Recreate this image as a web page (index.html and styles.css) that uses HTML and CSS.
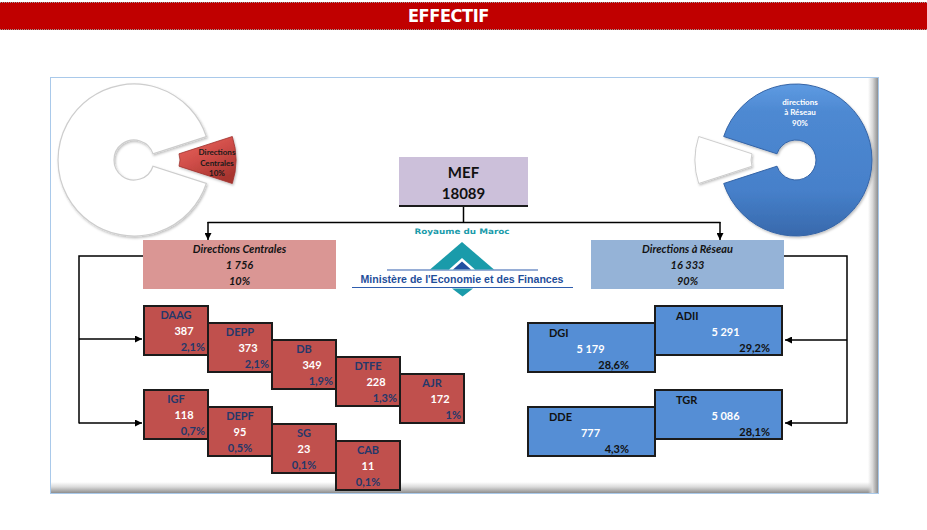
FILE: index.html
```html
<!DOCTYPE html>
<html lang="fr">
<head>
<meta charset="utf-8">
<title>Effectif</title>
<link rel="stylesheet" href="styles.css">
</head>
<body>
<div class="header"><span class="title">EFFECTIF</span></div>

<div class="frame">
  <svg class="canvas" viewBox="51 78 827 415" width="827" height="415" xmlns="http://www.w3.org/2000/svg">
    <defs>
      <linearGradient id="gBlue" x1="0" y1="0" x2="0" y2="1">
        <stop offset="0" stop-color="#5E9BE2"/>
        <stop offset="0.18" stop-color="#4E89D2"/>
        <stop offset="0.7" stop-color="#4680CA"/>
        <stop offset="1" stop-color="#3869AC"/>
      </linearGradient>
      <linearGradient id="gRed" x1="0" y1="0" x2="0.6" y2="1">
        <stop offset="0" stop-color="#EB6660"/>
        <stop offset="0.5" stop-color="#D04E49"/>
        <stop offset="1" stop-color="#A8352F"/>
      </linearGradient>
      <filter id="soft" x="-10%" y="-10%" width="130%" height="130%">
        <feDropShadow dx="1" dy="1.5" stdDeviation="1.2" flood-color="#000" flood-opacity="0.25"/>
      </filter>
      <marker id="arr" viewBox="0 0 10 10" refX="10" refY="5" markerUnits="userSpaceOnUse" markerWidth="7" markerHeight="7" orient="auto">
        <path d="M0,0 L10,5 L0,10 z" fill="#000"/>
      </marker>
    </defs>

    <!-- left donut (white 90%) and exploded red slice -->
    <path d="M206.3 136.5 A76 76 0 1 0 206.3 183.5 L153 166.2 A20 20 0 1 1 153 153.8 Z" fill="#fff" stroke="#cdcdcd" stroke-width="1.2" filter="url(#soft)"/>
    <path d="M179 153.8 L232.3 136.5 A76 76 0 0 1 232.3 183.5 L179 166.2 A20 20 0 0 0 179 153.8 Z" fill="url(#gRed)" stroke="#9E302C" stroke-width="0.8" filter="url(#soft)"/>
    <g class="pielabel dark">
      <text x="217" y="155">Directions</text>
      <text x="217" y="165.5">Centrales</text>
      <text x="217" y="176">10%</text>
    </g>

    <!-- right donut (blue 90%) and exploded white slice -->
    <path d="M723.7 136.5 A76 76 0 1 1 723.7 183.5 L777 166.2 A20 20 0 1 0 777 153.8 Z" fill="url(#gBlue)" stroke="#3564A6" stroke-width="1" filter="url(#soft)"/>
    <path d="M752 153.8 L698.7 136.5 A76 76 0 0 0 698.7 183.5 L752 166.2 A20 20 0 0 1 752 153.8 Z" fill="#fff" stroke="#cdcdcd" stroke-width="1" filter="url(#soft)"/>
    <g class="pielabel light">
      <text x="800" y="105">directions</text>
      <text x="800" y="115">à Réseau</text>
      <text x="800" y="125.5">90%</text>
    </g>

    <!-- connectors -->
    <g stroke="#000" stroke-width="1.5" fill="none">
      <line x1="463.5" y1="207" x2="463.5" y2="222.5"/>
      <line x1="207.5" y1="222.5" x2="720.5" y2="222.5"/>
      <line x1="208" y1="222" x2="208" y2="240" marker-end="url(#arr)"/>
      <line x1="720" y1="222" x2="720" y2="240" marker-end="url(#arr)"/>
      <polyline points="143,256 79,256 79,423.5"/>
      <line x1="79" y1="339" x2="142" y2="339" marker-end="url(#arr)"/>
      <line x1="79" y1="423" x2="142" y2="423" marker-end="url(#arr)"/>
      <polyline points="784,256 847,256 847,423.5"/>
      <line x1="847" y1="340" x2="785" y2="340" marker-end="url(#arr)"/>
      <line x1="847" y1="423" x2="785" y2="423" marker-end="url(#arr)"/>
    </g>

    <!-- ministry logo -->
    <g class="logo">
      <text class="royaume" x="462" y="233.5" textLength="95" lengthAdjust="spacingAndGlyphs">Royaume du Maroc</text>
      <line x1="387" y1="270" x2="538" y2="270" stroke="#2F5DAE" stroke-width="1.2"/>
      <polygon points="430,269.5 462,242 494,269.5" fill="#1A9BAA"/>
      <polygon points="449,269.5 462,258 475,269.5" fill="#fff"/>
      <polygon points="453,269.5 462,261.5 471,269.5" fill="#2050A0"/>
      <text class="ministere" x="462" y="283" textLength="203" lengthAdjust="spacingAndGlyphs">Ministère de l'Economie et des Finances</text>
      <line x1="352" y1="287.5" x2="573" y2="287.5" stroke="#2F5DAE" stroke-width="1.2"/>
      <polygon points="452,288.5 473,288.5 462.5,296.5" fill="#1A9BAA"/>
    </g>
  </svg>

  <div class="mef">
    <div>MEF</div>
    <div>18089</div>
  </div>

  <div class="summary sum-dc">
    <div>Directions Centrales</div>
    <div>1 756</div>
    <div>10%</div>
  </div>

  <div class="summary sum-dr">
    <div>Directions à Réseau</div>
    <div>16 333</div>
    <div>90%</div>
  </div>

  <div class="stair stair-l1">
    <div class="box red shift"><div class="nm">DAAG</div><div class="nb">387</div><div class="pc">2,1%</div></div>
    <div class="box red shift s1"><div class="nm">DEPP</div><div class="nb">373</div><div class="pc">2,1%</div></div>
    <div class="box red shift s2"><div class="nm">DB</div><div class="nb">349</div><div class="pc">1,9%</div></div>
    <div class="box red shift s3"><div class="nm">DTFE</div><div class="nb">228</div><div class="pc">1,3%</div></div>
    <div class="box red shift s4"><div class="nm">AJR</div><div class="nb">172</div><div class="pc">1%</div></div>
  </div>

  <div class="stair stair-l2">
    <div class="box red shift"><div class="nm">IGF</div><div class="nb">118</div><div class="pc">0,7%</div></div>
    <div class="box red center s1"><div class="nm">DEPF</div><div class="nb">95</div><div class="pc">0,5%</div></div>
    <div class="box red center s2"><div class="nm">SG</div><div class="nb">23</div><div class="pc">0,1%</div></div>
    <div class="box red center s3"><div class="nm">CAB</div><div class="nb">11</div><div class="pc">0,1%</div></div>
  </div>

  <div class="stair stair-r1">
    <div class="box blue left s1"><div class="nm">DGI</div><div class="nb">5 179</div><div class="pc">28,6%</div></div>
    <div class="box blue right"><div class="nm">ADII</div><div class="nb">5 291</div><div class="pc">29,2%</div></div>
  </div>

  <div class="stair stair-r2">
    <div class="box blue left s1"><div class="nm">DDE</div><div class="nb">777</div><div class="pc">4,3%</div></div>
    <div class="box blue right"><div class="nm">TGR</div><div class="nb">5 086</div><div class="pc">28,1%</div></div>
  </div>
</div>
</body>
</html>
```

FILE: styles.css
```css
html, body {
  margin: 0;
  padding: 0;
  background: #ffffff;
}

body {
  font-family: Lato, "Open Sans", "Liberation Sans", sans-serif;
}

.header {
  margin-top: 2px;
  height: 26px;
  background: #C00000;
  border-top: 1px dotted #9a9a9a;
  border-bottom: 1px dotted #9a9a9a;
  text-align: center;
  padding-right: 30px;
}

.title {
  display: inline-block;
  color: #ffffff;
  font-family: "DejaVu Sans Condensed", "DejaVu Sans", sans-serif;
  font-stretch: condensed;
  font-weight: bold;
  font-size: 18px;
  line-height: 26px;
  letter-spacing: -0.4px;
}

.frame {
  position: relative;
  box-sizing: border-box;
  margin: 47px 0 0 50px;
  width: 829px;
  height: 417px;
  border: 1px solid #A9C9EA;
  background:
    linear-gradient(to right, rgba(255,255,255,0) 0%, #d9d9d9 45%, #8e8e8e 100%) right top / 10px 100% no-repeat,
    linear-gradient(to bottom, rgba(255,255,255,0) 0%, #dadada 45%, #8e8e8e 100%) left bottom / 100% 11px no-repeat,
    #ffffff;
}

.canvas {
  position: absolute;
  left: 0;
  top: 0;
  display: block;
}

.pielabel text {
  font-family: Lato, "Liberation Sans", sans-serif;
  font-weight: bold;
  font-size: 8px;
  text-anchor: middle;
}

.pielabel.dark text { fill: #1a1a1a; }
.pielabel.light text { fill: #ffffff; }

.logo .royaume {
  font-family: "DejaVu Sans", sans-serif;
  font-weight: bold;
  font-size: 7.5px;
  fill: #1A9BAA;
  text-anchor: middle;
}

.logo .ministere {
  font-family: "Liberation Sans", Arial, sans-serif;
  font-weight: bold;
  font-size: 10px;
  fill: #1F4E9A;
  text-anchor: middle;
}

.mef {
  position: absolute;
  left: 348px;
  top: 79px;
  box-sizing: border-box;
  width: 129px;
  height: 50px;
  padding-top: 5px;
  background: #CCC0DA;
  border-bottom: 2px solid #1c1c1c;
  text-align: center;
  font-weight: bold;
  font-size: 15px;
  line-height: 21px;
  color: #111111;
}

.summary {
  position: absolute;
  top: 162px;
  box-sizing: border-box;
  width: 193px;
  height: 49px;
  padding-top: 1px;
  text-align: center;
  font-style: italic;
  font-weight: bold;
  font-size: 11px;
  line-height: 16px;
  color: #141414;
}

.sum-dc {
  left: 92px;
  background: #DA9694;
}

.sum-dr {
  left: 540px;
  background: #95B3D7;
}

.stair {
  position: absolute;
  display: flex;
  align-items: flex-start;
}

.stair-l1 { left: 92px; top: 227px; }
.stair-l2 { left: 92px; top: 311px; }
.stair-r1 { left: 476px; top: 227px; }
.stair-r2 { left: 476px; top: 311px; }

.box {
  box-sizing: border-box;
  flex: none;
  height: 51px;
  border: 2px solid #1b1b1b;
  font-weight: bold;
  font-size: 11px;
  line-height: 16px;
  white-space: nowrap;
}

.box + .box { margin-left: -2px; }

.s1 { margin-top: 17px; }
.s2 { margin-top: 34px; }
.s3 { margin-top: 51px; }
.s4 { margin-top: 68px; }

.red {
  width: 66px;
  background: #C0504D;
  color: #25386A;
}

.red .nb { color: #ffffff; }

.red.shift .nm { text-align: center; }
.red.shift .nb { text-align: center; padding-left: 16px; }
.red.shift .pc { text-align: right; padding-right: 2px; }

.red.center .nm,
.red.center .nb,
.red.center .pc { text-align: center; }

.blue {
  width: 129px;
  padding-top: 1px;
  background: #558ED5;
  color: #111111;
}

.blue .nm { padding-left: 20px; }
.blue .nb { color: #ffffff; text-align: center; }
.blue .pc { text-align: right; }

.blue.left .nb { padding-right: 2px; }
.blue.left .pc { padding-right: 25px; }

.blue.right .nb { padding-left: 14px; }
.blue.right .pc { padding-right: 11px; }
```
